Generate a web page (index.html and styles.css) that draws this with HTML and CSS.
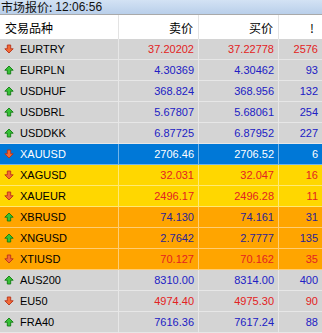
FILE: index.html
```html
<!DOCTYPE html>
<html lang="zh">

<head>
    <meta charset="UTF-8">
    <title>市场报价</title>
    <link rel="stylesheet" href="styles.css">
</head>

<body>
    <div class="title-bar"><span class="title-label">市场报价:</span><span class="title-time">12:06:56</span></div>

    <div class="quotes">
        <!-- Cabecera -->
        <div class="row header">
            <div class="cell sym">交易品种</div>
            <div class="cell num">卖价</div>
            <div class="cell num">买价</div>
            <div class="cell num">!</div>
        </div>

        <div class="row red">
            <div class="cell sym"><span class="arrow down"></span>EURTRY</div>
            <div class="cell num">37.20202</div>
            <div class="cell num">37.22778</div>
            <div class="cell num">2576</div>
        </div>
        <div class="row blue">
            <div class="cell sym"><span class="arrow up"></span>EURPLN</div>
            <div class="cell num">4.30369</div>
            <div class="cell num">4.30462</div>
            <div class="cell num">93</div>
        </div>
        <div class="row blue">
            <div class="cell sym"><span class="arrow up"></span>USDHUF</div>
            <div class="cell num">368.824</div>
            <div class="cell num">368.956</div>
            <div class="cell num">132</div>
        </div>
        <div class="row blue">
            <div class="cell sym"><span class="arrow up"></span>USDBRL</div>
            <div class="cell num">5.67807</div>
            <div class="cell num">5.68061</div>
            <div class="cell num">254</div>
        </div>
        <div class="row blue">
            <div class="cell sym"><span class="arrow up"></span>USDDKK</div>
            <div class="cell num">6.87725</div>
            <div class="cell num">6.87952</div>
            <div class="cell num">227</div>
        </div>
        <div class="row selected">
            <div class="cell sym"><span class="arrow down"></span>XAUUSD</div>
            <div class="cell num">2706.46</div>
            <div class="cell num">2706.52</div>
            <div class="cell num">6</div>
        </div>
        <div class="row gold red">
            <div class="cell sym"><span class="arrow down"></span>XAGUSD</div>
            <div class="cell num">32.031</div>
            <div class="cell num">32.047</div>
            <div class="cell num">16</div>
        </div>
        <div class="row gold red">
            <div class="cell sym"><span class="arrow down"></span>XAUEUR</div>
            <div class="cell num">2496.17</div>
            <div class="cell num">2496.28</div>
            <div class="cell num">11</div>
        </div>
        <div class="row orange blue">
            <div class="cell sym"><span class="arrow up"></span>XBRUSD</div>
            <div class="cell num">74.130</div>
            <div class="cell num">74.161</div>
            <div class="cell num">31</div>
        </div>
        <div class="row orange blue">
            <div class="cell sym"><span class="arrow up"></span>XNGUSD</div>
            <div class="cell num">2.7642</div>
            <div class="cell num">2.7777</div>
            <div class="cell num">135</div>
        </div>
        <div class="row orange red">
            <div class="cell sym"><span class="arrow down"></span>XTIUSD</div>
            <div class="cell num">70.127</div>
            <div class="cell num">70.162</div>
            <div class="cell num">35</div>
        </div>
        <div class="row blue">
            <div class="cell sym"><span class="arrow up"></span>AUS200</div>
            <div class="cell num">8310.00</div>
            <div class="cell num">8314.00</div>
            <div class="cell num">400</div>
        </div>
        <div class="row red">
            <div class="cell sym"><span class="arrow down"></span>EU50</div>
            <div class="cell num">4974.40</div>
            <div class="cell num">4975.30</div>
            <div class="cell num">90</div>
        </div>
        <div class="row blue">
            <div class="cell sym"><span class="arrow up"></span>FRA40</div>
            <div class="cell num">7616.36</div>
            <div class="cell num">7617.24</div>
            <div class="cell num">88</div>
        </div>
    </div>
</body>

</html>
```

FILE: styles.css
```css
/* Estilos generales */
body {
    margin: 0;
    width: 322px;
    height: 333px;
    overflow: hidden;
    background-color: #d4d4d4;
    font-family: 'Liberation Sans', Arial, 'Noto Sans CJK SC', sans-serif;
    font-size: 11px;
    color: #000;
}

.title-bar {
    display: flex;
    align-items: center;
    height: 14px;
    padding-left: 1px;
    background: linear-gradient(#d3e2f4, #b9cfea);
    color: #111;
}

.title-label {
    font-family: 'Noto Sans CJK SC', sans-serif;
    font-size: 12px;
    line-height: 14px;
}

.title-time {
    margin-left: 3px;
    font-size: 12px;
    line-height: 14px;
}

.quotes {
    display: flex;
    flex-direction: column;
}

/* Filas */
.row {
    display: grid;
    grid-template-columns: 119px 80px 80px 1fr;
    height: 21px;
    box-sizing: border-box;
    border-bottom: 1px solid rgba(255, 255, 255, 0.45);
    background-color: #d4d4d4;
}

.cell {
    display: flex;
    align-items: center;
    border-right: 1px solid rgba(255, 255, 255, 0.45);
    white-space: nowrap;
    overflow: hidden;
}

.cell:last-child {
    border-right: none;
}

.sym {
    padding-left: 4px;
    color: #000;
}

.num {
    justify-content: flex-end;
    padding-right: 4px;
}

.row.header {
    height: 25px;
    background-color: #fff;
    border-top: 1px solid #a9a9a9;
    border-bottom: none;
    font-family: 'Noto Sans CJK SC', sans-serif;
    font-size: 12px;
}

.row.header .cell {
    border-right-color: #e3e3e3;
    color: #000;
}

.row.header .sym {
    padding-left: 5px;
}

.row.header .num {
    padding-right: 5px;
}

.row.header .num:last-child {
    padding-right: 8px;
}

/* Colores */
.blue .num {
    color: #2020c4;
}

.red .num {
    color: #e32222;
}

.gold {
    background-color: #ffd700;
}

.orange {
    background-color: #ffa500;
}

.orange.blue .num {
    color: #2a2496;
}

.selected {
    background-color: #0078d7;
}

.selected .cell {
    color: #fff;
}

/* Flechas */
.arrow {
    display: inline-block;
    width: 10px;
    height: 10px;
    margin-right: 6px;
    background-repeat: no-repeat;
}

.arrow.up {
    background-image: url("data:image/svg+xml;utf8,<svg xmlns='http://www.w3.org/2000/svg' width='10' height='10' viewBox='0 0 10 10'><path d='M5 1 L9.2 5.2 L6.7 5.2 L6.7 9 L3.3 9 L3.3 5.2 L0.8 5.2 Z' fill='%2336c136' stroke='%23127a12' stroke-width='0.9' stroke-linejoin='round'/></svg>");
}

.arrow.down {
    background-image: url("data:image/svg+xml;utf8,<svg xmlns='http://www.w3.org/2000/svg' width='10' height='10' viewBox='0 0 10 10'><path d='M5 9 L9.2 4.8 L6.7 4.8 L6.7 1 L3.3 1 L3.3 4.8 L0.8 4.8 Z' fill='%23f26a36' stroke='%23b8321a' stroke-width='0.9' stroke-linejoin='round'/></svg>");
}
```
